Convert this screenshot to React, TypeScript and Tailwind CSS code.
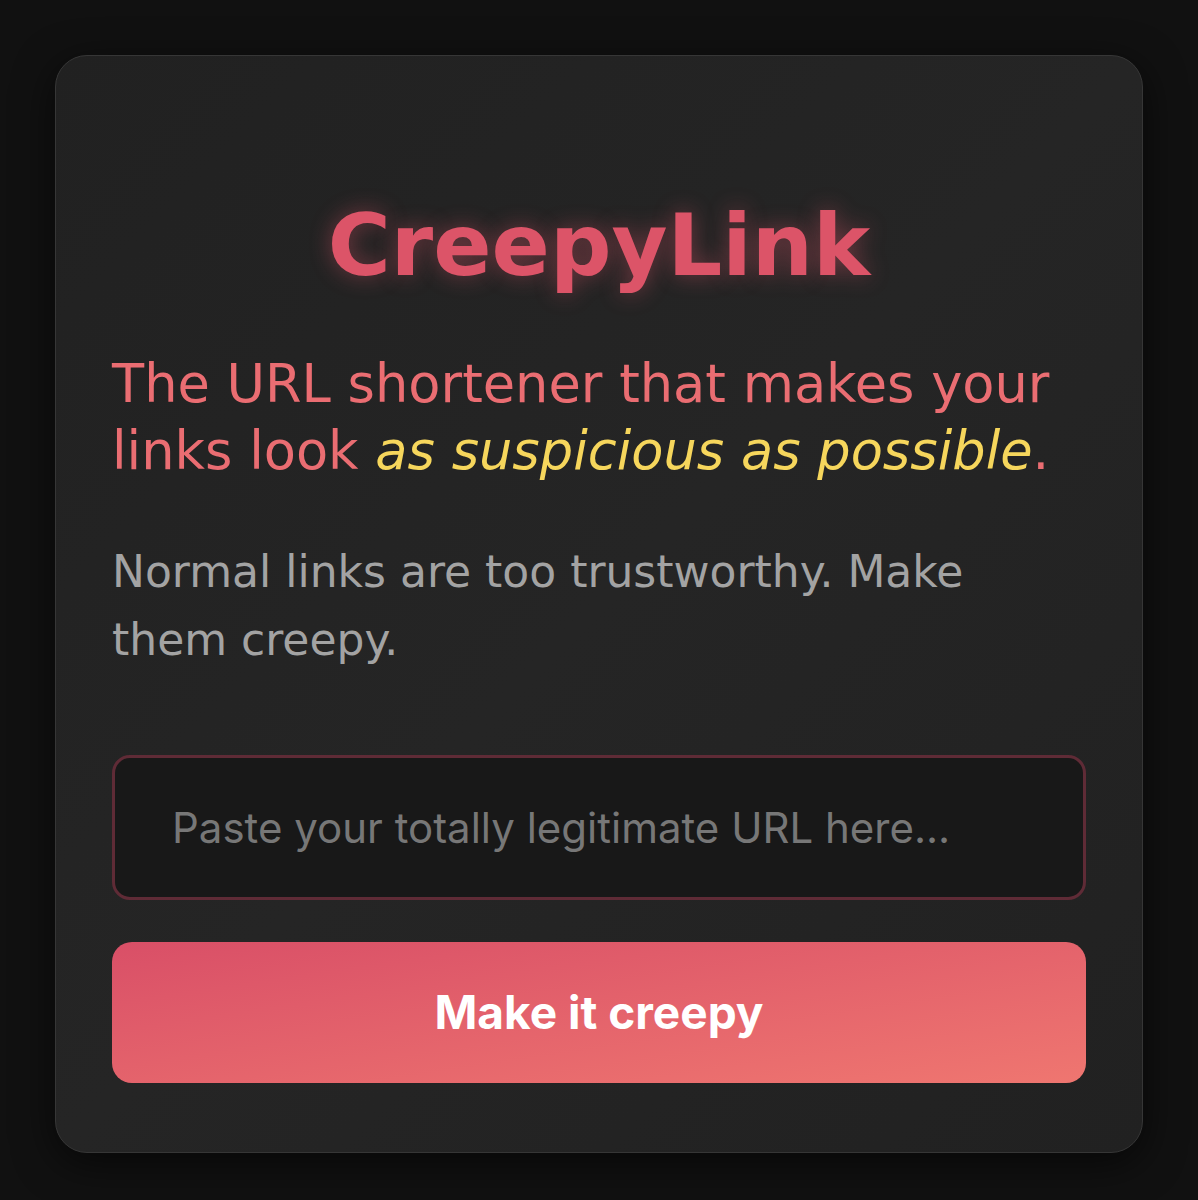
export default function App() {
  return (
    <div className="min-h-screen w-full bg-[#111111] px-[55px] pt-[55px] pb-[46px]">
      <div className="rounded-[32px] border border-[#363636] bg-[#222222] bg-gradient-to-br from-[#212121] via-[#252525] to-[#212121] px-[56px] pt-[139px] pb-[69px] shadow-[0_10px_40px_rgba(0,0,0,0.6)]">
        <h1
          className="text-center font-['DejaVu_Sans',sans-serif] text-[86px] font-bold leading-[100px] text-[#dc5468]"
          style={{ textShadow: "0 0 22px rgba(220,84,104,0.45)" }}
        >
          CreepyLink
        </h1>

        <p className="mt-[55px] font-['DejaVu_Sans',sans-serif] text-[52.6px] leading-[67px] text-[#ea6d72]">
          The URL shortener that makes your links look{" "}
          <em className="italic text-[#f6d65c]">as suspicious as possible</em>.
        </p>

        <p className="mt-[54px] font-['DejaVu_Sans',sans-serif] text-[44px] leading-[68px] text-[#a3a3a3]">
          Normal links are too trustworthy. Make them creepy.
        </p>

        <input
          type="text"
          placeholder="Paste your totally legitimate URL here..."
          className="mt-[81px] block h-[145px] w-full rounded-[18px] border-[3px] border-[#5f2b36] bg-[#181818] px-[57px] font-['Inter',sans-serif] text-[42px] text-[#dddddd] placeholder:text-[#777777] outline-none"
        />

        <button className="mt-[42px] flex h-[141px] w-full items-center justify-center rounded-[20px] bg-gradient-to-br from-[#d94f67] to-[#ef7670] font-['Inter',sans-serif] text-[46px] font-bold text-white">
          Make it creepy
        </button>
      </div>
    </div>
  );
}
